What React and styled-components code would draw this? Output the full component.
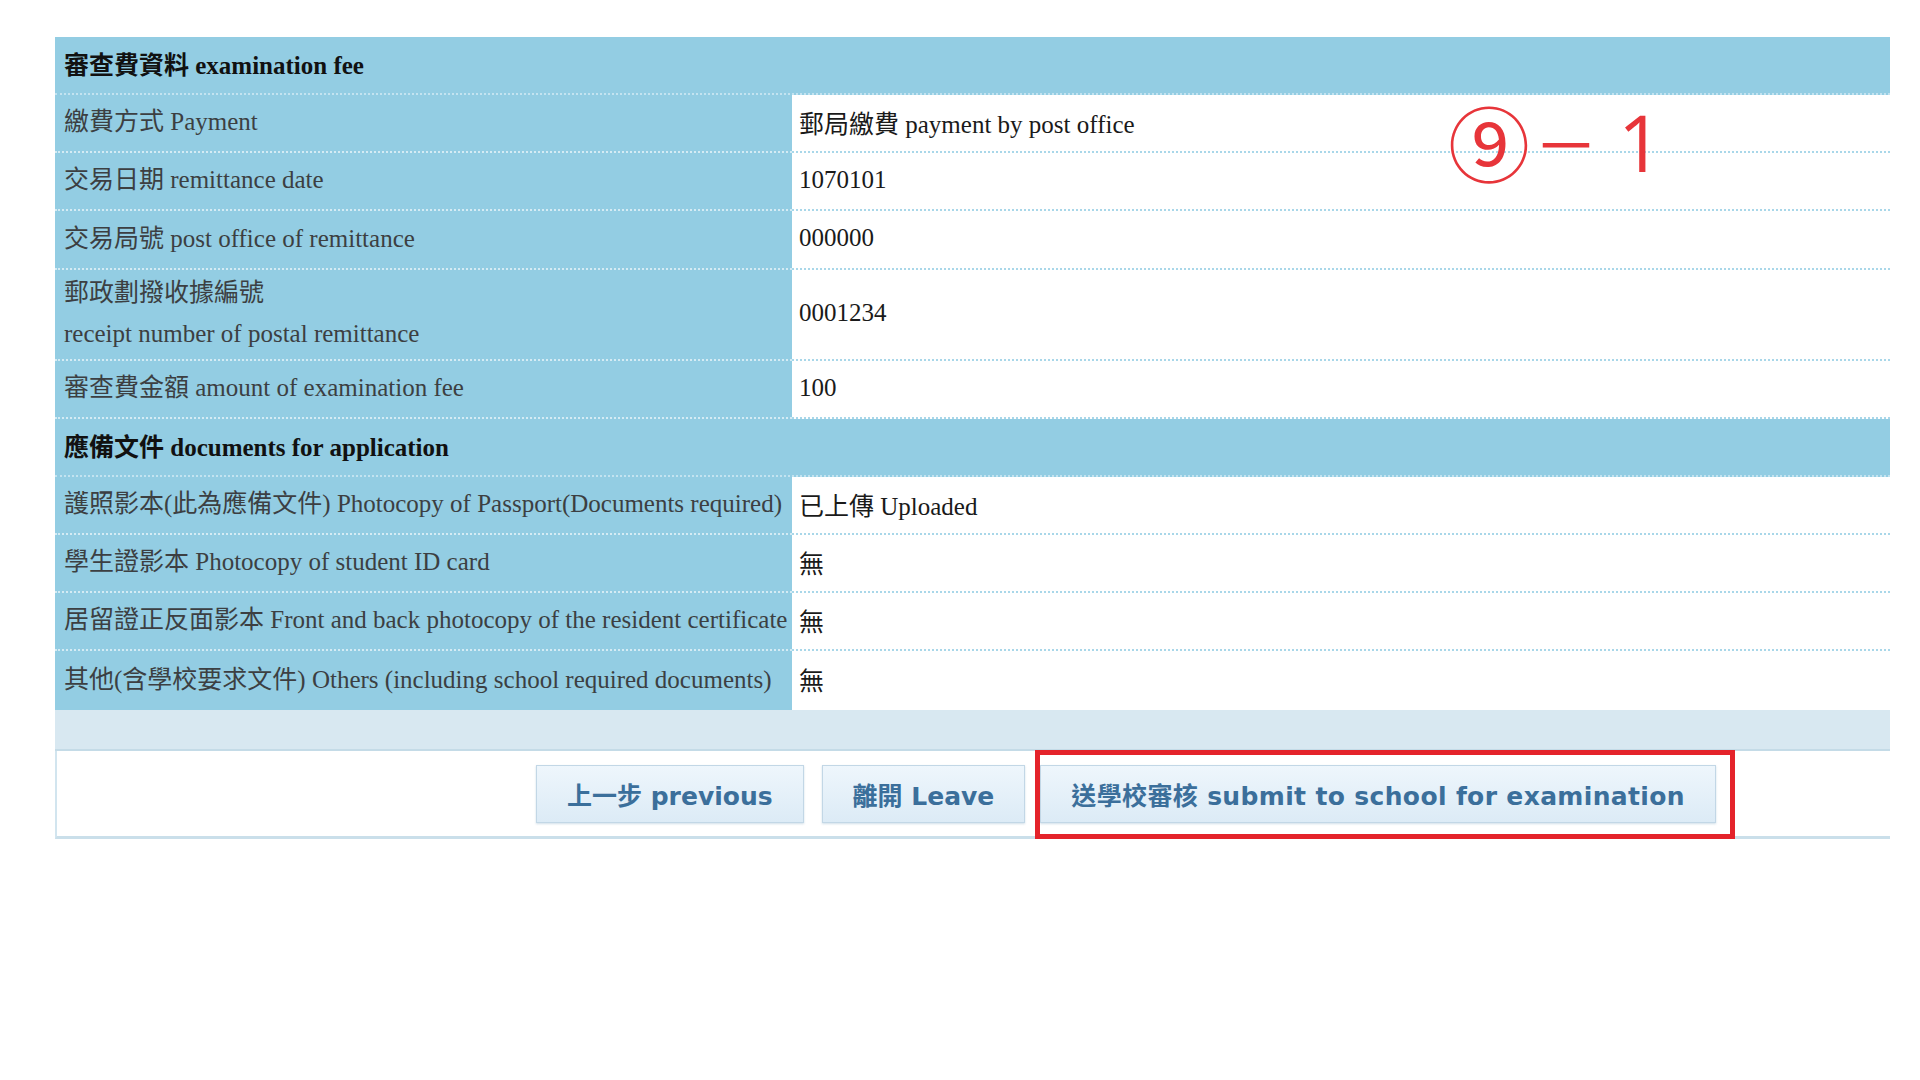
import React from "react";
import styled, { createGlobalStyle } from "styled-components";

const GlobalStyle = createGlobalStyle`
  html, body {
    margin: 0;
    padding: 0;
    background: #ffffff;
  }
  body {
    font-family: "Liberation Serif", "Noto Sans CJK TC", serif;
  }
`;

const blue = "#93cde3";

const Page = styled.div`
  position: relative;
  width: 1920px;
  height: 1080px;
  box-sizing: border-box;
  padding: 37px 30px 0 55px;
`;

const Sheet = styled.div`
  width: 1835px;
`;

const Section = styled.div`
  box-sizing: border-box;
  height: ${(p) => p.$h}px;
  background: ${blue};
  display: flex;
  align-items: center;
  padding: 0 0 4px 9px;
  font-size: 25px;
  font-weight: bold;
  color: #111;
  border-bottom: 2px dotted rgba(255, 255, 255, 0.45);
`;

const Row = styled.div`
  display: grid;
  grid-template-columns: 737px 1fr;
  height: ${(p) => p.$h}px;
`;

const Label = styled.div`
  box-sizing: border-box;
  background: ${blue};
  display: flex;
  flex-direction: column;
  justify-content: center;
  padding: 0 0 3px 9px;
  font-size: 25px;
  line-height: 41px;
  color: #3c3f42;
  white-space: nowrap;
  border-bottom: ${(p) => (p.$last ? "none" : "2px dotted rgba(255, 255, 255, 0.6)")};
`;

const Value = styled.div`
  box-sizing: border-box;
  background: #ffffff;
  display: flex;
  align-items: center;
  padding: 0 0 3px 7px;
  font-size: 25px;
  color: #1a1a1a;
  border-bottom: ${(p) => (p.$last ? "none" : "2px dotted #a9d7e9")};
`;

const Band = styled.div`
  box-sizing: border-box;
  height: 41px;
  background: #d8e8f1;
  border-bottom: 2px solid #c4dbe7;
`;

const ButtonPanel = styled.div`
  box-sizing: border-box;
  height: 88px;
  display: flex;
  align-items: flex-start;
  padding: 14px 0 0 479px;
  border-left: 2px solid #d2e5ef;
  border-bottom: 3px solid #cadfea;
`;

const Button = styled.button`
  box-sizing: border-box;
  height: 58px;
  margin: 0 0 0 ${(p) => p.$gap || 0}px;
  padding: 0 30px;
  background: linear-gradient(#eef6fc, #dcebf6);
  border: 1px solid #c2d7e6;
  border-radius: 0;
  box-shadow: 0 1px 2px rgba(120, 160, 190, 0.35);
  font-family: "DejaVu Sans", "Noto Sans CJK TC", sans-serif;
  font-weight: bold;
  font-size: 25px;
  letter-spacing: ${(p) => (p.$wide ? "0.35px" : "0")};
  color: #3b6f9b;
  white-space: nowrap;
  cursor: pointer;
`;

const Highlight = styled.div`
  position: relative;
  margin-left: 15px;

  &::after {
    content: "";
    position: absolute;
    top: -15px;
    left: -5px;
    right: -19px;
    bottom: -16px;
    border: 5px solid #e4232b;
    pointer-events: none;
  }
`;

const Note = styled.div`
  position: absolute;
  top: 100px;
  left: 1448px;
  display: flex;
  align-items: center;
  color: #e7353a;
  white-space: nowrap;
  line-height: 1;
`;

const Circled = styled.span`
  font-family: "Noto Sans CJK TC", sans-serif;
  font-size: 82px;
`;

const Dash = styled.span`
  font-family: "Noto Sans CJK TC", sans-serif;
  font-size: 64px;
  margin: 0 20px 0 4px;
`;

const One = styled.span`
  font-family: "Open Sans", sans-serif;
  font-size: 78px;
  margin-top: 2px;
`;

const feeRows = [
  { label: "繳費方式 Payment", value: "郵局繳費 payment by post office", h: 58 },
  { label: "交易日期 remittance date", value: "1070101", h: 58 },
  { label: "交易局號 post office of remittance", value: "000000", h: 59 },
  {
    label: ["郵政劃撥收據編號", "receipt number of postal remittance"],
    value: "0001234",
    h: 91,
  },
  { label: "審查費金額 amount of examination fee", value: "100", h: 58 },
];

const docRows = [
  { label: "護照影本(此為應備文件) Photocopy of Passport(Documents required)", value: "已上傳 Uploaded", h: 58 },
  { label: "學生證影本 Photocopy of student ID card", value: "無", h: 58 },
  { label: "居留證正反面影本 Front and back photocopy of the resident certificate", value: "無", h: 58 },
  { label: "其他(含學校要求文件) Others (including school required documents)", value: "無", h: 59 },
];

function InfoRow({ row, last }) {
  const lines = Array.isArray(row.label) ? row.label : [row.label];
  return (
    <Row $h={row.h}>
      <Label $last={last}>
        {lines.map((l) => (
          <span key={l}>{l}</span>
        ))}
      </Label>
      <Value $last={last}>{row.value}</Value>
    </Row>
  );
}

export default function App() {
  return (
    <>
      <GlobalStyle />
      <Page>
        <Sheet>
          <Section $h={58}>審查費資料 examination fee</Section>
          {feeRows.map((r) => (
            <InfoRow key={r.value} row={r} />
          ))}
          <Section $h={58}>應備文件 documents for application</Section>
          {docRows.map((r, i) => (
            <InfoRow key={r.label} row={r} last={i === docRows.length - 1} />
          ))}
          <Band />
          <ButtonPanel>
            <Button>上一步 previous</Button>
            <Button $gap={18}>離開 Leave</Button>
            <Highlight>
              <Button $wide>送學校審核 submit to school for examination</Button>
            </Highlight>
          </ButtonPanel>
        </Sheet>
        <Note>
          <Circled>⑨</Circled>
          <Dash>－</Dash>
          <One>1</One>
        </Note>
      </Page>
    </>
  );
}
